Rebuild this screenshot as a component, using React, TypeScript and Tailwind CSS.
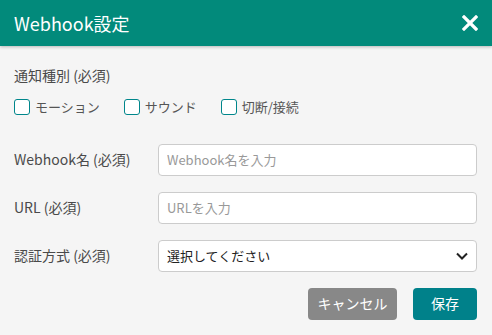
import { useState } from "react";

const FONT = "font-['Noto_Sans_CJK_JP','Noto_Sans',sans-serif]";

const Check = ({ label, className }: { label: string; className?: string }) => {
	const [on, setOn] = useState(false);
	return (
		<label className={`flex items-center gap-[5px] cursor-pointer ${className ?? ""}`}>
			<span
				onClick={() => setOn(!on)}
				className="h-4 w-4 rounded-[3px] border-[1.5px] border-[#00868b] bg-white"
			/>
			<span className="text-[13px] text-[#555]">{label}</span>
		</label>
	);
};

const Row = ({ label, children }: { label: string; children: React.ReactNode }) => (
	<div className="flex items-center h-8">
		<div className="w-[144px] text-[14px] text-[#4a4a4a]">{label}</div>
		<div className="flex-1">{children}</div>
	</div>
);

export default function App() {
	return (
		<div className={`w-[492px] h-[335px] bg-[#f5f5f5] ${FONT}`}>
			<div className="flex h-[46px] items-center justify-between bg-[#028a7b] px-[14px] shadow-[0_1px_3px_rgba(0,0,0,0.25)]">
				<h1 className="text-[18px] text-white">Webhook設定</h1>
				<svg width="16" height="16" viewBox="0 0 16 16" aria-label="閉じる">
					<path d="M2 2L14 14M14 2L2 14" stroke="white" strokeWidth="3.2" strokeLinecap="square" />
				</svg>
			</div>

			<div className="px-[14px] pt-[19px]">
				<div className="text-[14px] text-[#4a4a4a]">通知種別 (必須)</div>
				<div className="mt-[11px] flex items-center">
					<Check label="モーション" />
					<Check label="サウンド" className="ml-[24px]" />
					<Check label="切断/接続" className="ml-[24px]" />
				</div>

				<div className="mt-[27px] flex flex-col gap-4 pr-[1px]">
					<Row label="Webhook名 (必須)">
						<input
							placeholder="Webhook名を入力"
							className="h-8 w-full rounded-[4px] border border-[#ccc] bg-white px-2 text-[13px] text-[#222] placeholder:text-[#999] outline-none"
						/>
					</Row>
					<Row label="URL (必須)">
						<input
							placeholder="URLを入力"
							className="h-8 w-full rounded-[4px] border border-[#ccc] bg-white px-2 text-[13px] text-[#222] placeholder:text-[#999] outline-none"
						/>
					</Row>
					<Row label="認証方式 (必須)">
						<div className="flex h-8 w-full items-center justify-between rounded-[4px] border border-[#ccc] bg-white pl-2 pr-[8px]">
							<span className="text-[13px] text-[#222]">選択してください</span>
							<svg width="12" height="8" viewBox="0 0 12 8">
								<path d="M1 1.5L6 6.5L11 1.5" fill="none" stroke="#222" strokeWidth="2" />
							</svg>
						</div>
					</Row>
				</div>

				<div className="mt-4 flex justify-end gap-4 pr-[1px]">
					<button className="h-8 w-[89px] rounded-[4px] bg-[#888] text-[14px] text-white">キャンセル</button>
					<button className="h-8 w-16 rounded-[4px] bg-[#00818a] text-[14px] text-white">保存</button>
				</div>
			</div>
		</div>
	);
}
